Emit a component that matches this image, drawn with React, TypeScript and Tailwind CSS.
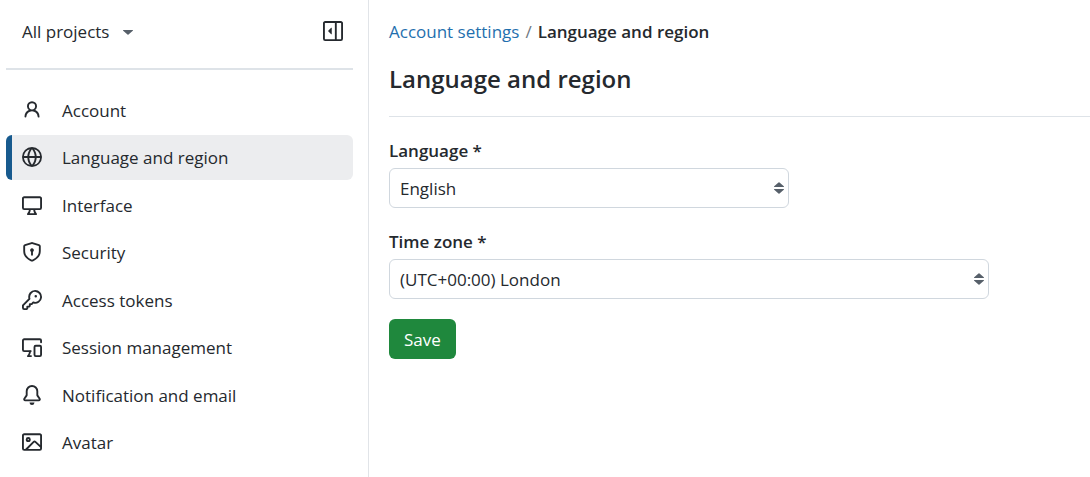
import type { ReactNode } from 'react'
import clsx from 'clsx'

type IconProps = { children: ReactNode }

function Icon({ children }: IconProps) {
  return (
    <svg aria-hidden="true" viewBox="0 0 16 16" className="size-5 shrink-0 fill-current">
      {children}
    </svg>
  )
}

const navItems = [
  {
    label: 'Account',
    icon: (
      <path d="M10.561 8.073a6.005 6.005 0 0 1 3.432 5.142.75.75 0 1 1-1.498.07 4.5 4.5 0 0 0-8.99 0 .75.75 0 0 1-1.498-.07 6.004 6.004 0 0 1 3.431-5.142 3.999 3.999 0 1 1 5.123 0ZM10.5 5a2.5 2.5 0 1 0-5 0 2.5 2.5 0 0 0 5 0Z" />
    ),
  },
  {
    label: 'Language and region',
    active: true,
    icon: (
      <path d="M8 0a8 8 0 1 1 0 16A8 8 0 0 1 8 0ZM5.78 8.75a9.64 9.64 0 0 0 1.363 4.177c.255.426.542.832.857 1.215.245-.296.551-.705.857-1.215A9.64 9.64 0 0 0 10.22 8.75Zm4.44-1.5a9.64 9.64 0 0 0-1.363-4.177c-.307-.51-.612-.919-.857-1.215a9.927 9.927 0 0 0-.857 1.215A9.64 9.64 0 0 0 5.78 7.25Zm-5.944 1.5H1.543a6.507 6.507 0 0 0 4.666 5.5c-.123-.181-.24-.365-.352-.552-.715-1.192-1.437-2.874-1.581-4.948Zm-2.733-1.5h2.733c.144-2.074.866-3.756 1.58-4.948.12-.197.237-.381.353-.552a6.507 6.507 0 0 0-4.666 5.5Zm10.181 1.5c-.144 2.074-.866 3.756-1.58 4.948-.12.197-.237.381-.353.552a6.507 6.507 0 0 0 4.666-5.5Zm2.733-1.5a6.507 6.507 0 0 0-4.666-5.5c.123.181.24.365.353.552.714 1.192 1.436 2.874 1.58 4.948Z" />
    ),
  },
  {
    label: 'Interface',
    icon: (
      <path d="M14.25 1c.966 0 1.75.784 1.75 1.75v7.5A1.75 1.75 0 0 1 14.25 12h-3.727c.099 1.041.52 1.872 1.292 2.757A.752.752 0 0 1 11.25 16h-6.5a.75.75 0 0 1-.565-1.243c.772-.885 1.192-1.716 1.292-2.757H1.75A1.75 1.75 0 0 1 0 10.25v-7.5C0 1.784.784 1 1.75 1ZM1.75 2.5a.25.25 0 0 0-.25.25v7.5c0 .138.112.25.25.25h12.5a.25.25 0 0 0 .25-.25v-7.5a.25.25 0 0 0-.25-.25ZM9.018 12H6.982a5.72 5.72 0 0 1-.765 2.5h3.566a5.72 5.72 0 0 1-.765-2.5Z" />
    ),
  },
  {
    label: 'Security',
    icon: (
      <path d="m8.533.133 5.25 1.68A1.75 1.75 0 0 1 15 3.48V7c0 1.566-.32 3.182-1.303 4.682-.983 1.498-2.585 2.813-5.032 3.855a1.697 1.697 0 0 1-1.33 0c-2.447-1.042-4.049-2.357-5.032-3.855C1.32 10.182 1 8.566 1 7V3.48a1.755 1.755 0 0 1 1.217-1.667l5.25-1.68a1.748 1.748 0 0 1 1.066 0Zm-.61 1.429.001.001-5.25 1.68a.251.251 0 0 0-.174.237V7c0 1.36.275 2.666 1.057 3.859.784 1.194 2.121 2.342 4.366 3.298a.196.196 0 0 0 .154 0c2.245-.957 3.582-2.103 4.366-3.297C13.225 9.666 13.5 8.358 13.5 7V3.48a.25.25 0 0 0-.174-.238l-5.25-1.68a.25.25 0 0 0-.153 0ZM9.5 6.5c0 .536-.286 1.032-.75 1.3v2.45a.75.75 0 0 1-1.5 0V7.8A1.5 1.5 0 1 1 9.5 6.5Z" />
    ),
  },
  {
    label: 'Access tokens',
    icon: (
      <path d="M10.5 0a5.499 5.499 0 1 1-1.288 10.848l-.932.932a.749.749 0 0 1-.53.22H7v.75a.749.749 0 0 1-.22.53l-.5.5a.749.749 0 0 1-.53.22H5v.75a.749.749 0 0 1-.22.53l-.5.5a.749.749 0 0 1-.53.22h-2A1.75 1.75 0 0 1 0 14.25v-2c0-.199.079-.389.22-.53l4.932-4.932A5.5 5.5 0 0 1 10.5 0Zm-4 5.5c-.001.431.069.86.205 1.269a.75.75 0 0 1-.181.768L1.5 12.56v1.69c0 .138.112.25.25.25h1.69l.06-.06v-1.19a.75.75 0 0 1 .75-.75h1.19l.06-.06v-1.19a.75.75 0 0 1 .75-.75h1.19l1.023-1.025a.75.75 0 0 1 .768-.18A4 4 0 1 0 6.5 5.5ZM11 6a1 1 0 1 1 0-2 1 1 0 0 1 0 2Z" />
    ),
  },
  {
    label: 'Session management',
    icon: (
      <g fill="none" stroke="currentColor" strokeWidth="1.5" strokeLinecap="round" strokeLinejoin="round">
        <path d="M15.25 4.2V2.75a1 1 0 0 0-1-1H1.75a1 1 0 0 0-1 1v7.5a1 1 0 0 0 1 1H7" />
        <path d="M6.5 11.5Q6.200 13.800 4.750 15.250H7.200" />
        <rect x="10" y="7" width="5.25" height="8.25" rx="1" />
      </g>
    ),
  },
  {
    label: 'Notification and email',
    icon: (
      <path d="M8 16a2 2 0 0 0 1.985-1.75c.017-.137-.097-.25-.235-.25h-3.5c-.138 0-.252.113-.235.25A2 2 0 0 0 8 16ZM3 5a5 5 0 0 1 10 0v2.947c0 .05.015.098.042.139l1.703 2.555A1.519 1.519 0 0 1 13.482 13H2.518a1.516 1.516 0 0 1-1.263-2.36l1.703-2.554A.255.255 0 0 0 3 7.947Zm5-3.5A3.5 3.5 0 0 0 4.5 5v2.947c0 .346-.102.683-.294.97l-1.703 2.556a.017.017 0 0 0-.003.01l.001.006c0 .002.002.004.004.006l.006.004.007.001h10.964l.007-.001.006-.004.004-.006.001-.007a.017.017 0 0 0-.003-.01l-1.703-2.554a1.745 1.745 0 0 1-.294-.97V5A3.5 3.5 0 0 0 8 1.5Z" />
    ),
  },
  {
    label: 'Avatar',
    icon: (
      <path d="M16 13.25A1.75 1.75 0 0 1 14.25 15H1.75A1.75 1.75 0 0 1 0 13.25V2.75C0 1.784.784 1 1.75 1h12.5c.966 0 1.75.784 1.75 1.75ZM1.75 2.5a.25.25 0 0 0-.25.25v10.5c0 .138.112.25.25.25h.94l.03-.03 6.077-6.078a1.75 1.75 0 0 1 2.412-.06L14.5 10.31V2.75a.25.25 0 0 0-.25-.25Zm12.5 11a.25.25 0 0 0 .25-.25v-.917l-4.298-3.889a.25.25 0 0 0-.344.009L4.81 13.5ZM7 6a2 2 0 1 1-3.999.001A2 2 0 0 1 7 6ZM5.5 6a.5.5 0 1 0-1 0 .5.5 0 0 0 1 0Z" />
    ),
  },
]

function Sidebar() {
  return (
    <aside className="w-[369px] shrink-0 border-r border-[#e1e4e8] pl-1.5 pr-[15px]">
      <div className="flex h-[70px] items-start justify-between border-b-2 border-[#dee3e8] pl-4 pr-2.5 pt-5">
        <button type="button" className="flex items-center gap-3.5 leading-6">
          All projects
          <svg aria-hidden="true" viewBox="0 0 10 5" className="h-[5px] w-2.5 fill-[#57606a]">
            <path d="M.4 0h9.2q.7.2.2.7L5.5 4.6q-.5.5-1 0L.2.7Q-.3.2.4 0Z" />
          </svg>
        </button>
        <button type="button" aria-label="Collapse sidebar" className="pt-px">
          <Icon>
            <path d="m4.177 7.823 2.396-2.396A.25.25 0 0 1 7 5.604v4.792a.25.25 0 0 1-.427.177L4.177 8.177a.25.25 0 0 1 0-.354Z" />
            <path d="M1.75 0h12.5C15.216 0 16 .784 16 1.75v12.5A1.75 1.75 0 0 1 14.25 16H1.75A1.75 1.75 0 0 1 0 14.25V1.75C0 .784.784 0 1.75 0ZM1.5 1.75v12.5c0 .138.112.25.25.25H9.5v-13H1.75a.25.25 0 0 0-.25.25ZM11 14.5h3.25a.25.25 0 0 0 .25-.25V1.75a.25.25 0 0 0-.25-.25H11Z" />
          </Icon>
        </button>
      </div>

      <nav className="pt-[17px]">
        <ul className="flex min-h-[378px] flex-col justify-between">
          {navItems.map((item) => (
            <li key={item.label}>
              <a
                href="#"
                aria-current={item.active ? 'page' : undefined}
                className={clsx(
                  'flex h-[45px] items-center gap-5 rounded-md border-l-[6px] pl-2.5',
                  item.active ? 'border-[#175a8e] bg-[#ecedef]' : 'border-transparent'
                )}
              >
                <Icon>{item.icon}</Icon>
                <span className="pt-0.5">{item.label}</span>
              </a>
            </li>
          ))}
        </ul>
      </nav>
    </aside>
  )
}

type SelectFieldProps = {
  id: string
  label: string
  value: string
  className: string
}

function SelectField({ id, label, value, className }: SelectFieldProps) {
  return (
    <div className={clsx('max-w-full', className)}>
      <label htmlFor={id} className="block pb-1 font-semibold leading-[27px]">
        {label} *
      </label>
      <div className="relative">
        <select
          id={id}
          className="block h-10 w-full appearance-none rounded-md border border-[#d0d7de] bg-white px-2.5 pt-0.5"
        >
          <option>{value}</option>
        </select>
        <svg
          aria-hidden="true"
          viewBox="0 0 10 12"
          className="pointer-events-none absolute right-[5px] top-3.5 h-3 w-2.5 fill-[#57606a]"
        >
          <path d="M.4 5h9.2q.7-.2.2-.7L5.5.4q-.5-.5-1 0L.2 4.3Q-.3 4.8.4 5ZM.4 7h9.2q.7.2.2.7L5.5 11.6q-.5.5-1 0L.2 7.7Q-.3 7.2.4 7Z" />
        </svg>
      </div>
    </div>
  )
}

export default function App() {
  return (
    <div className="flex min-h-screen bg-white font-['Open_Sans','Noto_Sans',sans-serif] text-[17px] leading-6 text-[#25292e]">
      <Sidebar />
      <main className="min-w-0 flex-1 pl-5 pt-5">
        <nav aria-label="Breadcrumb">
          <ol className="flex gap-1.5">
            <li>
              <a href="#" className="text-[#1f6fae]">
                Account settings
              </a>
            </li>
            <li aria-hidden="true" className="text-[#6e7781]">
              /
            </li>
            <li aria-current="page" className="font-semibold">
              Language and region
            </li>
          </ol>
        </nav>
        <h1 className="mt-[17px] border-b border-[#dee3e8] pb-[19px] text-2xl font-semibold leading-9">
          Language and region
        </h1>

        <form className="flex flex-col items-start gap-5 pt-5">
          <SelectField id="language" label="Language" value="English" className="w-[400px]" />
          <SelectField id="time-zone" label="Time zone" value="(UTC+00:00) London" className="w-[600px]" />
          <button type="button" className="h-10 rounded-md bg-[#1f883d] px-[15px] pt-0.5 text-white">
            Save
          </button>
        </form>
      </main>
    </div>
  )
}
